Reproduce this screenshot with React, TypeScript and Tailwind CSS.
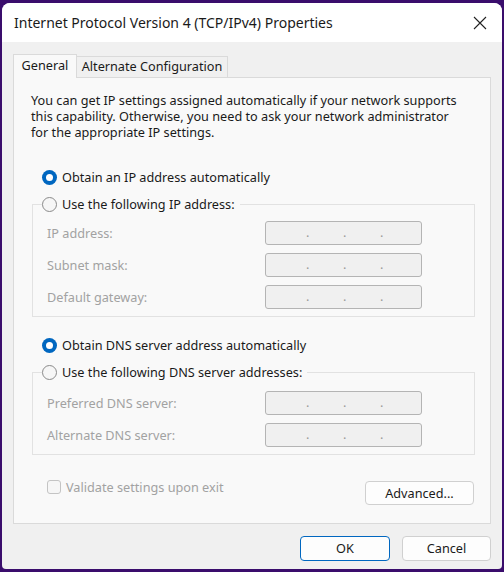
import React from 'react'

const font = { fontFamily: '"Noto Sans", "Open Sans", sans-serif' }

function Radio({ checked, label, disabled }: { checked?: boolean; label: string; disabled?: boolean }) {
  return (
    <div className="flex items-center gap-[5px] bg-[#f9f9f9] pr-[5px]">
      {checked ? (
        <span className="w-[15px] h-[15px] rounded-full bg-[#0067c0] flex items-center justify-center">
          <span className="w-[7px] h-[7px] rounded-full bg-white" />
        </span>
      ) : (
        <span className="w-[15px] h-[15px] rounded-full border border-[#8a8a8a] bg-[#f6f6f6]" />
      )}
      <span className={disabled ? 'text-[#9a9a9a]' : 'text-[#1a1a1a]'}>{label}</span>
    </div>
  )
}

function IpField({ label }: { label: string }) {
  return (
    <div className="flex items-center h-[24px]">
      <span className="w-[218px] text-[#a2a2a2]">{label}</span>
      <div className="w-[157px] h-[24px] rounded-[3px] border border-[#b4b4b4] bg-[#f0f0f0] flex items-end pb-[5px] text-[#9a9a9a] leading-none">
        <span className="ml-[40px] w-[4px]">.</span>
        <span className="ml-[33px] w-[4px]">.</span>
        <span className="ml-[33px] w-[4px]">.</span>
      </div>
    </div>
  )
}

function GroupBox({ radio, fields, top, pad }: { radio: React.ReactNode; fields: string[]; top: string; pad: string }) {
  return (
    <div className={`relative ml-[1px] mr-[15px] ${top}`}>
      <div className="absolute left-[10px] -top-[8px] z-10">{radio}</div>
      <div className={`border border-[#e2e2e2] ${pad} pb-[7px] pl-[14px] flex flex-col gap-[8px]`}>
        {fields.map((f) => (
          <IpField key={f} label={f} />
        ))}
      </div>
    </div>
  )
}

export default function App() {
  return (
    <div className="w-[504px] h-[572px] bg-[#3a0d6c] pl-[2px] pr-[2px] pt-[3px] pb-[3px]" style={font}>
      <div className="w-full h-full rounded-t-[8px] rounded-b-[4px] overflow-hidden bg-[#f0f0f0] flex flex-col">
        <div className="h-[39px] bg-white flex items-center justify-between pl-[12px] pr-[14px] shrink-0">
          <span className="text-[14px] text-[#1a1a1a]">Internet Protocol Version 4 (TCP/IPv4) Properties</span>
          <svg width="14" height="14" viewBox="0 0 14 14" className="mr-[1px]">
            <path d="M1 1 L13 13 M13 1 L1 13" stroke="#222" strokeWidth="1.1" />
          </svg>
        </div>

        <div className="flex-1 flex flex-col px-[11px] pt-[11px] text-[12.7px]">
          <div className="flex items-end h-[24px]">
            <div className="w-[64px] h-[24px] border border-b-0 border-[#dadada] bg-[#f9f9f9] flex items-center justify-center relative z-10 -mb-px pb-[2px] text-[#1a1a1a]">
              General
            </div>
            <div className="w-[151px] h-[21px] border border-l-0 border-b-0 border-[#dadada] bg-[#f0f0f0] flex items-center justify-center text-[#1a1a1a]">
              Alternate Configuration
            </div>
          </div>

          <div className="h-[447px] border border-[#dadada] bg-[#f9f9f9] pl-[17px] flex flex-col leading-[16px]">
            <p className="mt-[14px] leading-[16px] text-[#1a1a1a]">
              You can get IP settings assigned automatically if your network supports
              <br />
              this capability. Otherwise, you need to ask your network administrator
              <br />
              for the appropriate IP settings.
            </p>

            <div className="mt-[29px] ml-[11px]">
              <Radio checked label="Obtain an IP address automatically" />
            </div>
            <GroupBox
              top="mt-[19px]"
              pad="pt-[16px]"
              radio={<Radio label="Use the following IP address:" />}
              fields={['IP address:', 'Subnet mask:', 'Default gateway:']}
            />

            <div className="mt-[20px] ml-[11px]">
              <Radio checked label="Obtain DNS server address automatically" />
            </div>
            <GroupBox
              top="mt-[19px]"
              pad="pt-[18px]"
              radio={<Radio label="Use the following DNS server addresses:" />}
              fields={['Preferred DNS server:', 'Alternate DNS server:']}
            />

            <div className="mt-[26px] flex items-center justify-between pr-[16px]">
              <div className="flex items-center gap-[5px] ml-[16px] mt-[-12px]">
                <span className="w-[14px] h-[14px] rounded-[3px] border border-[#c4c4c4] bg-[#f6f6f6]" />
                <span className="text-[#a2a2a2]">Validate settings upon exit</span>
              </div>
              <button className="w-[109px] h-[24px] rounded-[4px] border border-[#d0d0d0] bg-[#fdfdfd] text-[#1a1a1a]">
                Advanced...
              </button>
            </div>
          </div>

          <div className="flex justify-end gap-[12px] mt-[12px]">
            <button className="w-[90px] h-[25px] rounded-[4px] border border-[#0067c0] bg-[#fdfdfd] text-[#1a1a1a]">
              OK
            </button>
            <button className="w-[89px] h-[25px] rounded-[4px] border border-[#d0d0d0] bg-[#fdfdfd] text-[#1a1a1a]">
              Cancel
            </button>
          </div>
        </div>
      </div>
    </div>
  )
}
